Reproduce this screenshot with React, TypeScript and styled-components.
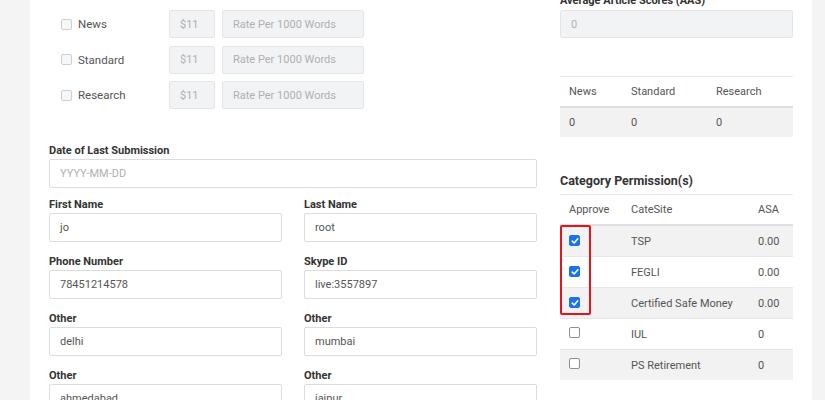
import React from "react";
import styled, { createGlobalStyle } from "styled-components";

const GlobalStyle = createGlobalStyle`
  html, body {
    margin: 0;
    padding: 0;
    background: #f4f4f4;
    font-family: Roboto, "Liberation Sans", Arial, sans-serif;
    overflow: hidden;
  }
`;

const Page = styled.div`
  width: 825px;
  height: 400px;
  overflow: hidden;
  background: #f4f4f4;
`;

const Panel = styled.div`
  margin-left: 30px;
  width: 782px;
  height: 400px;
  background: #fff;
  box-sizing: border-box;
  padding: 10px 19px 0 19px;
  display: grid;
  grid-template-columns: 488px 233px;
  column-gap: 23px;
  align-items: start;
`;

const Column = styled.div`
  display: flex;
  flex-direction: column;
`;

const RateList = styled.div`
  display: flex;
  flex-direction: column;
  gap: 7.5px;
  padding-left: 12px;
  margin-bottom: 35px;
`;

const RateRow = styled.div`
  display: flex;
  align-items: center;
  height: 28px;
`;

const CheckLabel = styled.label`
  display: flex;
  align-items: center;
  gap: 6px;
  width: 108px;
  font-size: 11.5px;
  color: #555;
`;

const Box = styled.span<{ $checked?: boolean; $muted?: boolean }>`
  display: inline-flex;
  align-items: center;
  justify-content: center;
  box-sizing: border-box;
  width: 11px;
  height: 11px;
  border-radius: 2px;
  border: 1px solid
    ${(p) => (p.$checked ? "#1a73e8" : p.$muted ? "#cfcfcf" : "#8f8f8f")};
  background: ${(p) => (p.$checked ? "#1a73e8" : p.$muted ? "#f7f7f7" : "#fff")};
  flex-shrink: 0;
`;

const Input = styled.div<{ $disabled?: boolean; $width?: string; $placeholder?: boolean }>`
  box-sizing: border-box;
  width: ${(p) => p.$width || "100%"};
  height: 29px;
  display: flex;
  align-items: center;
  padding: 0 10px;
  border: 1px solid ${(p) => (p.$disabled ? "#e3e5e8" : "#dcdcdc")};
  border-radius: 2px;
  background: ${(p) => (p.$disabled ? "#f2f3f5" : "#fff")};
  color: ${(p) => (p.$disabled || p.$placeholder ? "#b0b0b0" : "#555")};
  font-size: 11px;
  white-space: nowrap;
`;

const RateInputs = styled.div`
  display: flex;
  gap: 7px;
  & > div {
    height: 28px;
  }
`;

const FieldGrid = styled.div`
  display: grid;
  grid-template-columns: 233px 233px;
  column-gap: 22px;
  row-gap: 13px;
`;

const Field = styled.div<{ $wide?: boolean }>`
  display: flex;
  flex-direction: column;
  gap: 1px;
  grid-column: ${(p) => (p.$wide ? "1 / -1" : "auto")};
  margin-bottom: ${(p) => (p.$wide ? "-3px" : "0")};
`;

const Label = styled.div`
  font-size: 11px;
  font-weight: 700;
  color: #333;
  line-height: 14px;
`;

const ScoreLabel = styled(Label)`
  margin-top: -16px;
  margin-bottom: 2px;
`;

const Table = styled.table`
  width: 100%;
  border-collapse: collapse;
  font-size: 11px;
  color: #555;
  th {
    font-weight: 400;
    text-align: left;
    padding: 0 9px;
    height: 29px;
    border-top: 1px solid #e6e8eb;
    border-bottom: 2px solid #dcdfe3;
  }
  td {
    padding: 0 9px;
    border-top: 1px solid #e6e8eb;
  }
`;

const StatsTable = styled(Table)`
  margin-top: 38px;
  td {
    height: 29px;
    background: #f2f2f2;
  }
`;

const Heading = styled.div`
  margin-top: 35px;
  font-size: 12.5px;
  font-weight: 700;
  color: #333;
  line-height: 18px;
  margin-bottom: 4px;
`;

const PermWrap = styled.div`
  position: relative;
`;

const PermRow = styled.tr<{ $striped: boolean }>`
  td {
    height: 30px;
    background: ${(p) => (p.$striped ? "#f2f2f2" : "#fff")};
  }
`;

const Highlight = styled.div`
  position: absolute;
  left: 0;
  top: 31px;
  width: 31px;
  height: 90px;
  box-sizing: border-box;
  border: 2px solid #e8141c;
  border-radius: 2px;
  pointer-events: none;
`;

const CheckMark = () => (
  <svg width="8" height="8" viewBox="0 0 8 8">
    <path d="M1.2 4.2 L3.2 6 L6.8 1.8" fill="none" stroke="#fff" strokeWidth="1.6" strokeLinecap="round" strokeLinejoin="round" />
  </svg>
);

const rates = ["News", "Standard", "Research"];

const fields: { label: string; value: string }[] = [
  { label: "First Name", value: "jo" },
  { label: "Last Name", value: "root" },
  { label: "Phone Number", value: "78451214578" },
  { label: "Skype ID", value: "live:3557897" },
  { label: "Other", value: "delhi" },
  { label: "Other", value: "mumbai" },
  { label: "Other", value: "ahmedabad" },
  { label: "Other", value: "jaipur" },
];

const permissions = [
  { site: "TSP", asa: "0.00", checked: true },
  { site: "FEGLI", asa: "0.00", checked: true },
  { site: "Certified Safe Money", asa: "0.00", checked: true },
  { site: "IUL", asa: "0", checked: false },
  { site: "PS Retirement", asa: "0", checked: false },
];

export default function App() {
  return (
    <Page>
      <GlobalStyle />
      <Panel>
        <Column>
          <RateList>
            {rates.map((r) => (
              <RateRow key={r}>
                <CheckLabel>
                  <Box $muted />
                  {r}
                </CheckLabel>
                <RateInputs>
                  <Input $disabled $width="46px">$11</Input>
                  <Input $disabled $width="142px">Rate Per 1000 Words</Input>
                </RateInputs>
              </RateRow>
            ))}
          </RateList>
          <FieldGrid>
            <Field $wide>
              <Label>Date of Last Submission</Label>
              <Input $placeholder>YYYY-MM-DD</Input>
            </Field>
            {fields.map((f, i) => (
              <Field key={i}>
                <Label>{f.label}</Label>
                <Input>{f.value}</Input>
              </Field>
            ))}
          </FieldGrid>
        </Column>
        <Column>
          <ScoreLabel>Average Article Scores (AAS)</ScoreLabel>
          <Input $disabled style={{ height: 28 }}>0</Input>
          <StatsTable>
            <thead>
              <tr>
                <th style={{ width: 44 }}>News</th>
                <th style={{ width: 67 }}>Standard</th>
                <th>Research</th>
              </tr>
            </thead>
            <tbody>
              <tr>
                <td>0</td>
                <td>0</td>
                <td>0</td>
              </tr>
            </tbody>
          </StatsTable>
          <Heading>Category Permission(s)</Heading>
          <PermWrap>
            <Table>
              <thead>
                <tr>
                  <th style={{ width: 44 }}>Approve</th>
                  <th>CateSite</th>
                  <th style={{ width: 26 }}>ASA</th>
                </tr>
              </thead>
              <tbody>
                {permissions.map((p, i) => (
                  <PermRow key={p.site} $striped={i % 2 === 0}>
                    <td>
                      <Box $checked={p.checked}>{p.checked && <CheckMark />}</Box>
                    </td>
                    <td>{p.site}</td>
                    <td>{p.asa}</td>
                  </PermRow>
                ))}
              </tbody>
            </Table>
            <Highlight />
          </PermWrap>
        </Column>
      </Panel>
    </Page>
  );
}
